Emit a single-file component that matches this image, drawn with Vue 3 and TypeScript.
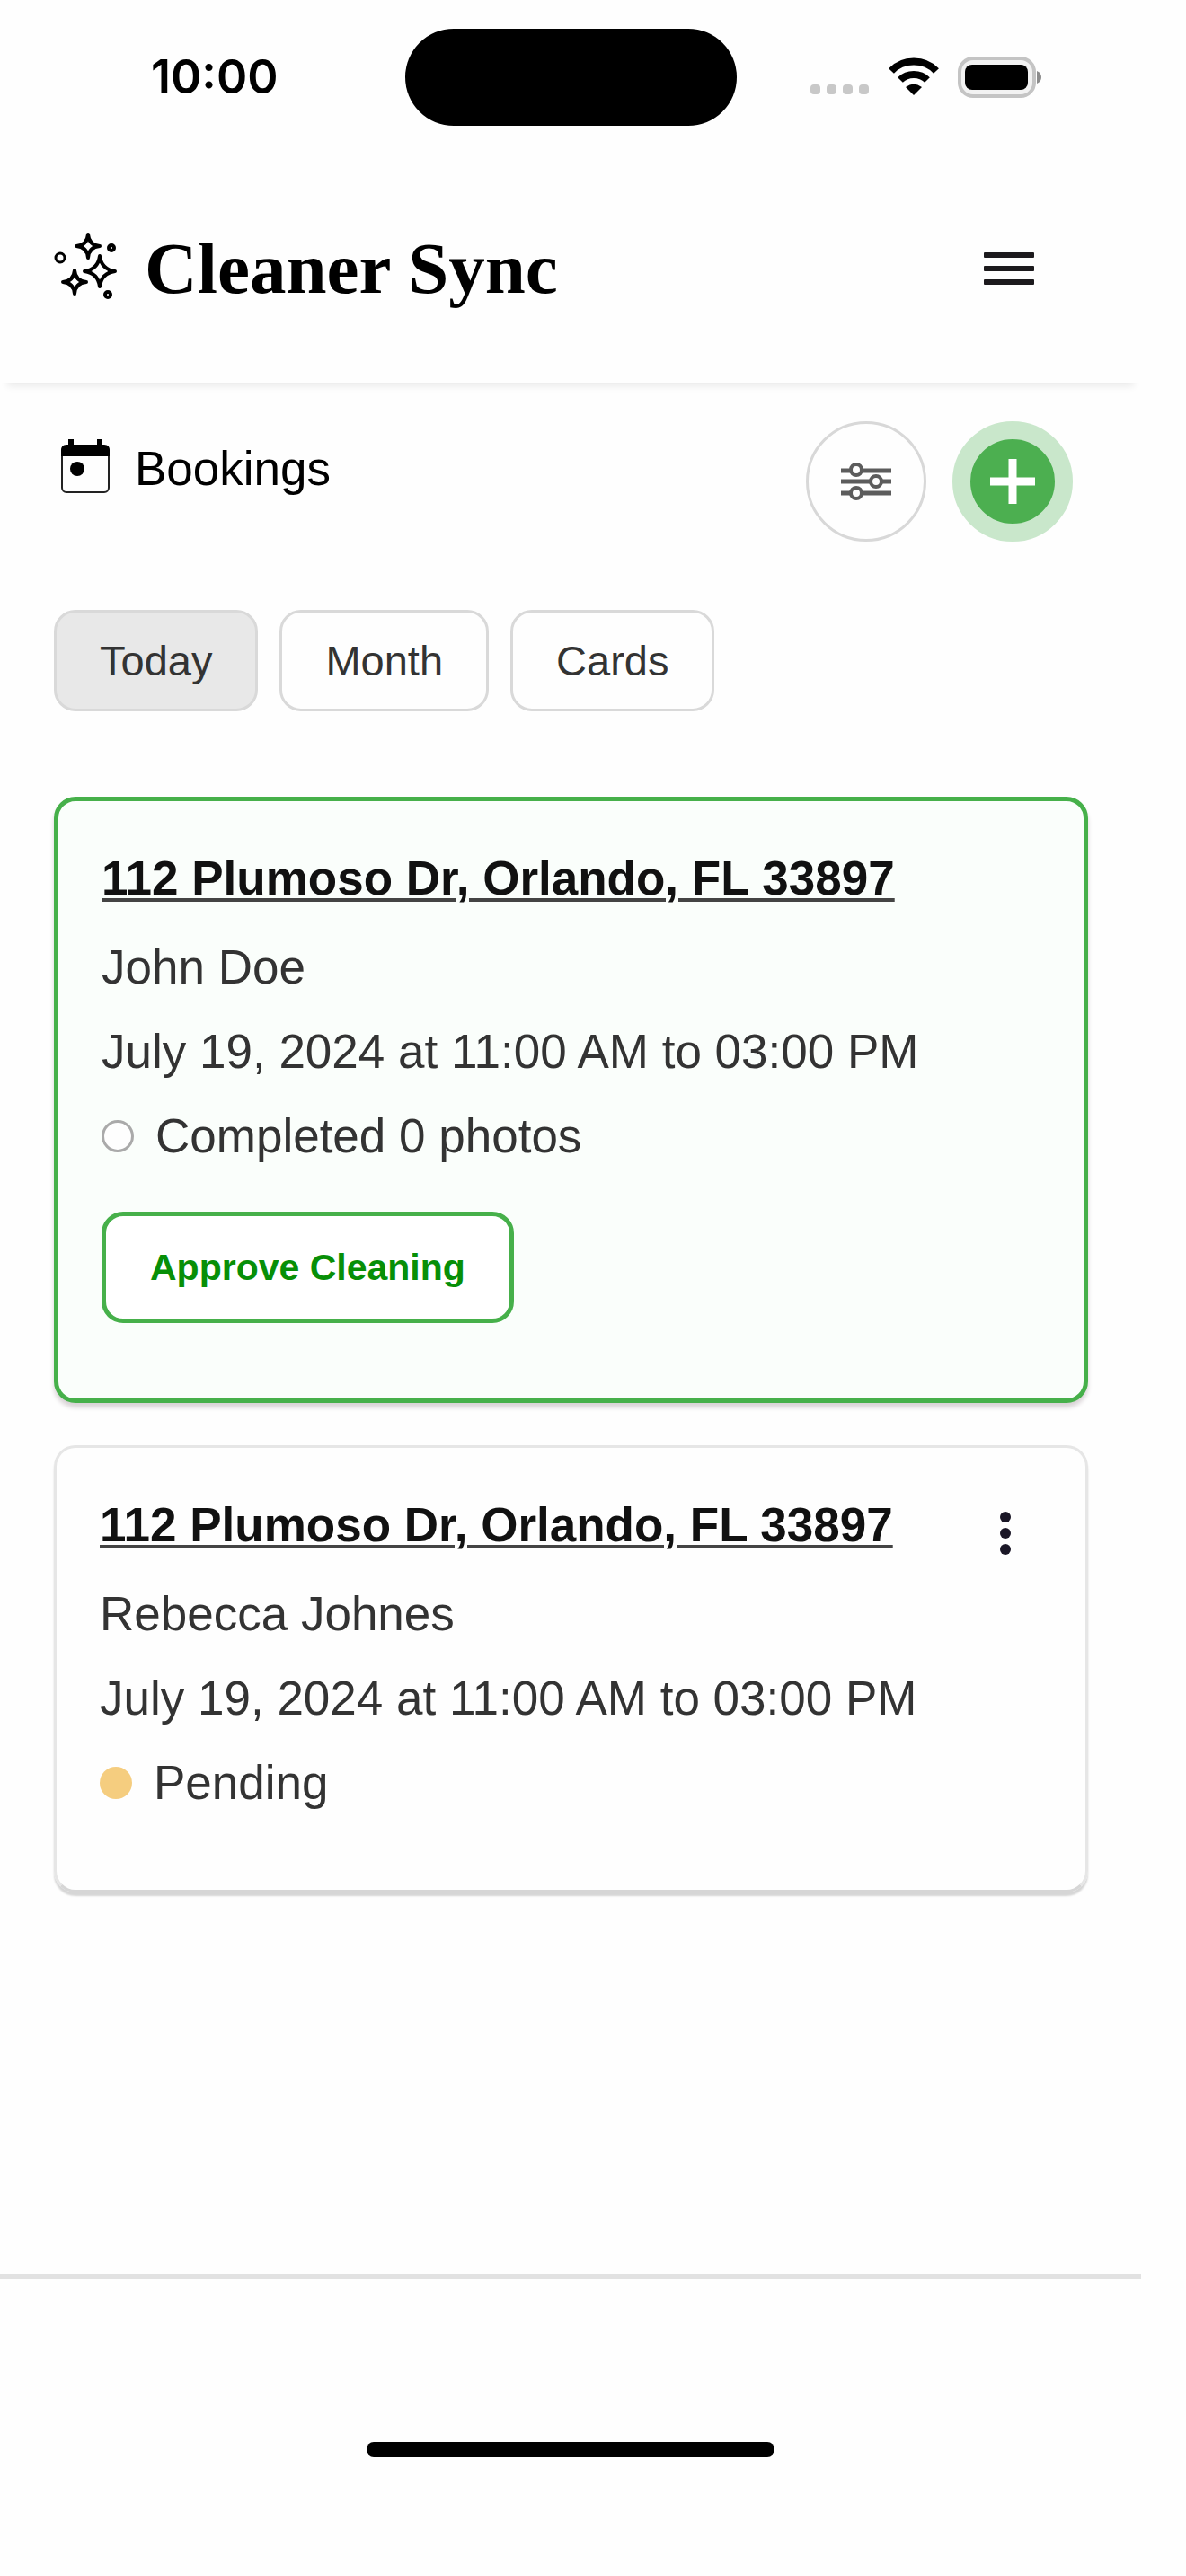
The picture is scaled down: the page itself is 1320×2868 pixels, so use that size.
<script setup lang="ts">
import { ref } from 'vue'

interface Booking {
  id: number
  address: string
  person: string
  time: string
  status: string
  state: 'completed' | 'pending'
}

const views: string[] = ['Today', 'Month', 'Cards']
const activeView = ref<string>('Today')

const bookings: Booking[] = [
  {
    id: 1,
    address: '112 Plumoso Dr, Orlando, FL 33897',
    person: 'John Doe',
    time: 'July 19, 2024 at 11:00 AM to 03:00 PM',
    status: 'Completed 0 photos',
    state: 'completed',
  },
  {
    id: 2,
    address: '112 Plumoso Dr, Orlando, FL 33897',
    person: 'Rebecca Johnes',
    time: 'July 19, 2024 at 11:00 AM to 03:00 PM',
    status: 'Pending',
    state: 'pending',
  },
]
</script>

<template>
  <div class="screen">
    <div class="status-bar">
      <div class="clock">10:00</div>
      <div class="island"></div>
      <div class="indicators">
        <svg class="signal" width="66" height="44" viewBox="0 0 66 44" fill="#c8c8c8" aria-hidden="true">
          <rect x="0" y="30" width="11" height="11" rx="4" />
          <rect x="18" y="30" width="11" height="11" rx="4" />
          <rect x="36" y="30" width="11" height="11" rx="4" />
          <rect x="54" y="30" width="11" height="11" rx="4" />
        </svg>
        <svg class="wifi" width="58" height="44" viewBox="0 0 58 44" fill="none" stroke="#000" stroke-width="8" aria-hidden="true">
          <path d="M4 15C17 1 41 1 54 15" />
          <path d="M14 25C22 17 36 17 44 25" />
          <path d="M29 42L20 33Q29 26 38 33Z" fill="#000" stroke="none" />
        </svg>
        <svg class="battery" width="94" height="46" viewBox="0 0 94 46" aria-hidden="true">
          <rect x="2" y="2" width="83" height="42" rx="15" fill="#f2f2f2" stroke="#c4c4c4" stroke-width="4" />
          <rect x="8" y="9" width="70" height="28" rx="8" fill="#000" />
          <path d="M88 16Q93 18 93 23Q93 28 88 30Z" fill="#8c8c8c" />
        </svg>
      </div>
    </div>

    <header class="app-header">
      <a class="brand" href="#">
        <svg width="74" height="84" viewBox="0 0 74 84" fill="none" stroke="#000" stroke-width="4" stroke-linejoin="round" aria-hidden="true">
          <path d="M40 4Q41 16 53 17Q41 18 40 30Q39 18 27 17Q39 16 40 4Z" />
          <path d="M53 28Q55 43 70 45Q55 47 53 62Q51 47 36 45Q51 43 53 28Z" />
          <path d="M25 44Q26 56 38 57Q26 58 25 70Q24 58 12 57Q24 56 25 44Z" />
          <circle cx="9" cy="30" r="5" stroke-width="3" />
          <circle cx="66" cy="19" r="3" />
          <circle cx="62" cy="71" r="3" />
        </svg>
        <span>Cleaner Sync</span>
      </a>
      <button class="menu" type="button" aria-label="Menu">
        <svg width="56" height="38" viewBox="0 0 56 38" fill="#1c1a1d" aria-hidden="true">
          <rect x="0" y="1" width="56" height="6" rx="1" />
          <rect x="0" y="16" width="56" height="6" rx="1" />
          <rect x="0" y="31" width="56" height="6" rx="1" />
        </svg>
      </button>
    </header>

    <main class="content">
      <div class="toolbar">
        <h1 class="page-title">
          <svg width="54" height="66" viewBox="0 0 54 66" aria-hidden="true">
            <rect x="8" y="0" width="6" height="10" fill="#000" />
            <rect x="40" y="0" width="6" height="10" fill="#000" />
            <rect x="1" y="8" width="52" height="51" rx="5" fill="none" stroke="#222" stroke-width="2" />
            <path d="M0 19V12Q0 6 6 6H48Q54 6 54 12V19Z" fill="#000" />
            <circle cx="18" cy="33" r="8" fill="#000" />
          </svg>
          <span>Bookings</span>
        </h1>
        <div class="actions">
          <button class="round filter" type="button" aria-label="Filter">
            <svg width="56" height="46" viewBox="0 0 56 46" fill="#fefefe" stroke="#5c5c5c" stroke-width="5" aria-hidden="true">
              <path d="M0 11H56M0 23H56M0 36H56" />
              <g stroke-width="4">
                <circle cx="17" cy="10" r="6" />
                <circle cx="39" cy="23" r="6" />
                <circle cx="17" cy="36" r="6" />
              </g>
            </svg>
          </button>
          <button class="round add" type="button" aria-label="Add booking">
            <svg width="50" height="50" viewBox="0 0 50 50" stroke="#fff" stroke-width="9" aria-hidden="true">
              <path d="M25 0V50M0 25H50" />
            </svg>
          </button>
        </div>
      </div>

      <div class="views">
        <button
          v-for="view in views"
          :key="view"
          type="button"
          class="view"
          :class="{ active: view === activeView }"
          :aria-pressed="view === activeView"
          @click="activeView = view"
        >{{ view }}</button>
      </div>

      <div class="bookings">
        <article v-for="b in bookings" :key="b.id" class="card" :class="b.state">
          <div class="card-head">
            <a class="address" href="#">{{ b.address }}</a>
            <button v-if="b.state === 'pending'" class="more" type="button" aria-label="More options">
              <svg width="12" height="48" viewBox="0 0 12 48" fill="#1a1626" aria-hidden="true">
                <circle cx="6" cy="6" r="6" />
                <circle cx="6" cy="24" r="6" />
                <circle cx="6" cy="42" r="6" />
              </svg>
            </button>
          </div>
          <p class="line">{{ b.person }}</p>
          <p class="line">{{ b.time }}</p>
          <p class="line status"><span class="dot"></span>{{ b.status }}</p>
          <button v-if="b.state === 'completed'" class="approve" type="button">Approve Cleaning</button>
        </article>
      </div>
    </main>

    <footer class="bottom">
      <div class="home-indicator"></div>
    </footer>
  </div>
</template>

<style>
body {
  background: #fefefe;
}
</style>

<style scoped>
* {
  box-sizing: border-box;
}

.screen {
  display: flex;
  flex-direction: column;
  min-height: 100vh;
  margin-right: 50px;
  color: #333;
  font-family: "Liberation Sans", Arial, Helvetica, sans-serif;
}

button {
  padding: 0;
  border: 0;
  background: none;
  font-family: inherit;
  cursor: pointer;
}

svg {
  display: block;
  flex: none;
}

.status-bar {
  display: grid;
  grid-template-columns: 1fr 369px 1fr;
  align-items: center;
  padding: 32px 0;
}

.clock {
  padding-right: 141px;
  color: #000;
  font: 600 52px/108px Inter, "Liberation Sans", sans-serif;
  text-align: right;
}

.island {
  height: 108px;
  border-radius: 54px;
  background: #000;
}

.indicators {
  display: flex;
  align-items: center;
  gap: 20px;
  height: 100px;
  padding-left: 82px;
}

.app-header {
  display: flex;
  align-items: center;
  justify-content: space-between;
  height: 254px;
  padding: 0 119px 0 58px;
  box-shadow: 0 12px 8px -8px rgba(0, 0, 0, 0.08);
}

.brand {
  display: flex;
  align-items: center;
  gap: 29px;
  color: #000;
  font: bold 81px/92px "Liberation Serif", "Times New Roman", serif;
  text-decoration: none;
}

.content {
  flex: 1;
  padding: 43px 59px 48px 60px;
}

.toolbar {
  display: flex;
  align-items: flex-start;
  justify-content: space-between;
  padding: 0 17px 0 8px;
}

.page-title {
  display: flex;
  align-items: center;
  gap: 28px;
  margin: 0;
  color: #000;
  font-weight: 400;
  font-size: 53px;
  line-height: 105px;
}

.actions {
  display: flex;
  gap: 29px;
}

.round {
  display: flex;
  align-items: center;
  justify-content: center;
  width: 134px;
  height: 134px;
  border-radius: 50%;
}

.filter {
  border: 3px solid #d8d8d8;
}

.add {
  border: 20px solid #c9e7cb;
  background: #4caf50;
}

.views {
  display: flex;
  gap: 24px;
  margin-top: 76px;
}

.view {
  height: 113px;
  padding: 0 48px;
  border: 3px solid #d9d9d9;
  border-radius: 24px;
  color: #333;
  font-size: 47px;
  line-height: 56px;
}

.view.active {
  background: #e8e8e8;
}

.bookings {
  display: flex;
  flex-direction: column;
  gap: 47px;
  margin-top: 95px;
}

.card {
  padding: 39px 48px 72px;
  border: 3px solid #e6e6e6;
  border-bottom-color: #d6d6d6;
  border-radius: 24px;
  font-size: 53px;
  line-height: 94px;
  box-shadow: 0 4px 2px #d6d6d6;
}

.card.completed {
  padding-bottom: 84px;
  border: 5px solid #46b04a;
  background: #fafefb;
  box-shadow: 0 5px 5px #d9d3d6;
}

.card-head {
  display: flex;
  align-items: flex-start;
  justify-content: space-between;
  margin-bottom: 5px;
}

.address {
  color: #111;
  font-weight: 700;
  text-decoration: underline #444;
  text-decoration-thickness: 4px;
  text-underline-offset: 4px;
}

.more {
  display: flex;
  align-items: center;
  justify-content: center;
  width: 82px;
  height: 64px;
  margin-top: 24px;
}

.line {
  margin: 0;
}

.status {
  display: flex;
  align-items: center;
  gap: 24px;
}

.dot {
  width: 36px;
  height: 36px;
  border-radius: 50%;
  background: #f5cd7f;
}

.completed .dot {
  border: 3px solid #aaa;
  background: #fefefe;
}

.approve {
  display: block;
  height: 124px;
  margin-top: 37px;
  padding: 0 49px;
  border: 5px solid #46b04a;
  border-radius: 24px;
  background: #fff;
  color: #078f07;
  font-weight: 700;
  font-size: 41px;
  line-height: 48px;
}

.bottom {
  display: flex;
  align-items: flex-start;
  justify-content: center;
  height: 336px;
  padding-top: 182px;
  border-top: 5px solid #e2e2e2;
}

.home-indicator {
  width: 454px;
  height: 16px;
  border-radius: 8px;
  background: #000;
}
</style>
